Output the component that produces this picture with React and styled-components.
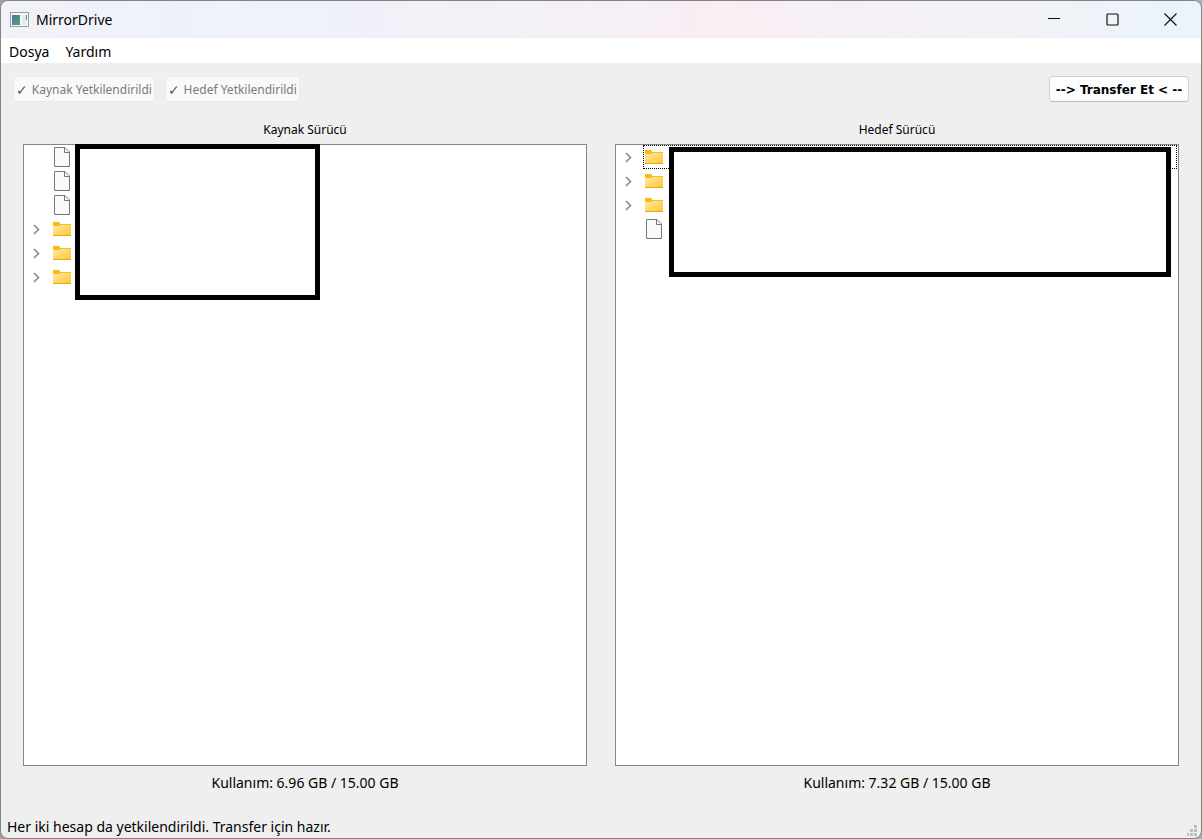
import React from "react";
import styled, { createGlobalStyle, css } from "styled-components";

const uiFont = '"Noto Sans", "Open Sans", sans-serif';

const GlobalStyle = createGlobalStyle`
  *, *::before, *::after { box-sizing: border-box; }
  html, body { margin: 0; }
  body {
    background: linear-gradient(90deg, #a89c96 0%, #6f8fa6 20%, #87616a 50%, #9a6d76 75%, #8fb9c2 100%);
    color: #000;
    font-family: ${uiFont};
  }
`;

const Window = styled.div`
  display: flex;
  flex-direction: column;
  min-height: 100vh;
  border: 1px solid #7f8488;
  border-radius: 8px;
  background: #efefef;
  overflow: hidden;
`;

const TitleBar = styled.header`
  display: flex;
  align-items: center;
  height: 37px;
  padding: 0 2px 0 9px;
  background: linear-gradient(90deg, #f3f1f8 0%, #edf2f9 14%, #f1f1f8 35%, #f8eef4 60%, #f3f1f6 80%, #eaf4fa 100%);
`;

const Title = styled.h1`
  flex: 1;
  margin: 0 0 0 6px;
  font-size: 14px;
  line-height: 20px;
  font-weight: 400;
`;

const CaptionButton = styled.button`
  display: grid;
  place-items: center;
  width: 58px;
  height: 100%;
  padding: 0;
  border: 0;
  background: transparent;
`;

const MenuBar = styled.nav`
  display: flex;
  gap: 16px;
  height: 25px;
  padding: 0 8px;
  background: #fff;
`;

const MenuItem = styled.button`
  padding: 0;
  border: 0;
  background: transparent;
  color: #000;
  font-family: ${uiFont};
  font-size: 14px;
  line-height: 28px;
`;

const Content = styled.main`
  display: flex;
  flex: 1;
  flex-direction: column;
  padding: 13px 12px 0;
`;

const Toolbar = styled.div`
  display: flex;
  gap: 10px;
`;

const ToolButton = styled.button`
  display: flex;
  align-items: center;
  justify-content: center;
  gap: 4px;
  height: 26px;
  padding: 2px 2px 0;
  border: 1px solid #d0d0d0;
  border-bottom-color: #b9b9b9;
  border-radius: 4px;
  background: #fdfdfd;
  color: #000;
  font-family: ${uiFont};
  font-size: 12px;
  line-height: 24px;
  white-space: nowrap;

  ${({ $primary }) =>
    $primary &&
    css`
      min-width: 140px;
      margin-left: auto;
      font-family: "DejaVu Sans", sans-serif;
      font-weight: 700;
    `}

  &:disabled {
    border-color: #e9e9e9;
    background: #f9f9f9;
    color: #7b7b7b;
  }
`;

const Check = styled.span`
  color: #5c5c5c;
  font-family: "DejaVu Sans", sans-serif;
  font-size: 14px;
`;

const Panels = styled.div`
  display: grid;
  grid-template-columns: 1fr 1fr;
  gap: 28px;
  flex: 1;
  padding: 18px 10px 0;
`;

const Panel = styled.section`
  display: flex;
  flex-direction: column;
  min-width: 0;
`;

const PanelTitle = styled.h2`
  margin: 0 0 4px;
  font-size: 12px;
  line-height: 20px;
  font-weight: 400;
  text-align: center;
`;

const Tree = styled.ul`
  position: relative;
  flex: 1;
  margin: 0;
  padding: 0;
  border: 1px solid #828790;
  background: #fff;
  list-style: none;
`;

const TreeRow = styled.li`
  display: flex;
  height: 24px;
  padding-right: 1px;
`;

const ExpandCell = styled.span`
  display: flex;
  align-items: center;
  width: 27px;
  padding-left: 8px;
`;

const ExpandButton = styled.button`
  display: grid;
  place-items: center;
  width: 8px;
  height: 16px;
  padding: 0;
  border: 0;
  background: transparent;
`;

const ItemCell = styled.span`
  display: flex;
  flex: 1;
  align-items: center;
  border: 1px dotted ${({ $focused }) => ($focused ? "#000" : "transparent")};
`;

const Cover = styled.li`
  position: absolute;
  border: 5px solid #000;
  background: #fff;
  ${({ $wide }) =>
    $wide
      ? css`top: 2px; left: 53px; right: 7px; height: 130px;`
      : css`top: -1px; left: 51px; width: 245px; height: 156px;`}
`;

const Usage = styled.p`
  margin: 6px 0 0;
  font-size: 14px;
  line-height: 22px;
  text-align: center;
`;

const StatusBar = styled.footer`
  display: flex;
  align-items: flex-end;
  justify-content: space-between;
  margin-top: 22px;
  padding: 0 3px 1px 6px;
  font-size: 14px;
  line-height: 21px;
`;

const AppIcon = () => (
  <svg width="20" height="16" viewBox="0 0 20 16" aria-hidden="true">
    <defs>
      <linearGradient id="screen" x1="0" y1="0" x2="1" y2="1">
        <stop offset="0" stopColor="#4779a5" />
        <stop offset="1" stopColor="#51a66c" />
      </linearGradient>
    </defs>
    <rect x="0.5" y="0.5" width="18" height="14" fill="#f5f7f7" stroke="#9a9fa3" />
    <rect x="2" y="3" width="8" height="10" fill="url(#screen)" />
    <rect x="12" y="3" width="4" height="10" fill="#e5eaeb" />
    <rect x="16" y="3" width="1" height="5" fill="#4c9b83" />
  </svg>
);

const FolderIcon = () => (
  <svg width="20" height="16" viewBox="0 0 20 16" aria-hidden="true">
    <defs>
      <linearGradient id="folder" x1="0" y1="0" x2="1" y2="1">
        <stop offset="0" stopColor="#ffe9a3" />
        <stop offset="1" stopColor="#ffc935" />
      </linearGradient>
    </defs>
    <path d="M1 1h6l1 1v1h11v2H1z" fill="#fbb917" />
    <path d="M1 5h6l1-1h11v10H1z" fill="url(#folder)" />
    <path d="M1 14.500h18" stroke="#eba917" strokeWidth="1" />
  </svg>
);

const FileIcon = () => (
  <svg width="20" height="20" viewBox="0 0 20 20" aria-hidden="true">
    <path d="M2.500 .5h10.500l4.500 4.500v14.500h-15z" fill="#fafafa" stroke="#777774" />
    <path d="M12.500 .5v5h5" fill="none" stroke="#777774" />
  </svg>
);

const Chevron = () => (
  <svg width="8" height="12" viewBox="0 0 8 12" aria-hidden="true">
    <path d="M2 2l4.500 4.500L2 11" fill="none" stroke="#8b8b8b" strokeWidth="1.600" />
  </svg>
);

const Grip = () => (
  <svg width="11" height="12" viewBox="0 0 11 12" aria-hidden="true">
    <path
      d="M7 0h3v3H7zM3 4h3v3H3zM7 4h3v3H7zM0 8h2v3H0zM3 8h3v3H3zM7 8h3v3H7z"
      fill="#bdbdbd"
    />
  </svg>
);

const captionIcons = [
  ["Simge durumuna küçült", <path key="m" d="M0 5.500h12" />],
  ["Ekranı kapla", <rect key="r" x="1" y="1" width="11" height="11" rx="1" />],
  ["Kapat", <path key="x" d="m.5.5 12 12m0-12-12 12" />],
];

function DriveTree({ label, items, focusedIndex, wide }) {
  return (
    <Tree aria-label={label}>
      {items.map((type, index) => (
        <TreeRow key={index}>
          <ExpandCell>
            {type === "folder" && (
              <ExpandButton type="button" aria-label="Genişlet">
                <Chevron />
              </ExpandButton>
            )}
          </ExpandCell>
          <ItemCell $focused={index === focusedIndex}>
            {type === "folder" ? <FolderIcon /> : <FileIcon />}
          </ItemCell>
        </TreeRow>
      ))}
      <Cover $wide={wide} aria-hidden="true" />
    </Tree>
  );
}

export default function App() {
  return (
    <>
      <GlobalStyle />
      <Window>
        <TitleBar>
          <AppIcon />
          <Title>MirrorDrive</Title>
          {captionIcons.map(([name, shape]) => (
            <CaptionButton key={name} type="button" aria-label={name}>
              <svg width="13" height="13" viewBox="0 0 13 13" fill="none" stroke="#111" strokeWidth="1.200">
                {shape}
              </svg>
            </CaptionButton>
          ))}
        </TitleBar>
        <MenuBar>
          <MenuItem type="button">Dosya</MenuItem>
          <MenuItem type="button">Yardım</MenuItem>
        </MenuBar>
        <Content>
          <Toolbar>
            <ToolButton type="button" disabled><Check>✓</Check>Kaynak Yetkilendirildi</ToolButton>
            <ToolButton type="button" disabled><Check>✓</Check>Hedef Yetkilendirildi</ToolButton>
            <ToolButton type="button" $primary>{"--> Transfer Et < --"}</ToolButton>
          </Toolbar>
          <Panels>
            <Panel>
              <PanelTitle>Kaynak Sürücü</PanelTitle>
              <DriveTree
                label="Kaynak Sürücü"
                items={["file", "file", "file", "folder", "folder", "folder"]}
              />
              <Usage>Kullanım: 6.96 GB / 15.00 GB</Usage>
            </Panel>
            <Panel>
              <PanelTitle>Hedef Sürücü</PanelTitle>
              <DriveTree
                label="Hedef Sürücü"
                items={["folder", "folder", "folder", "file"]}
                focusedIndex={0}
                wide
              />
              <Usage>Kullanım: 7.32 GB / 15.00 GB</Usage>
            </Panel>
          </Panels>
        </Content>
        <StatusBar>
          <span>Her iki hesap da yetkilendirildi. Transfer için hazır.</span>
          <Grip />
        </StatusBar>
      </Window>
    </>
  );
}
